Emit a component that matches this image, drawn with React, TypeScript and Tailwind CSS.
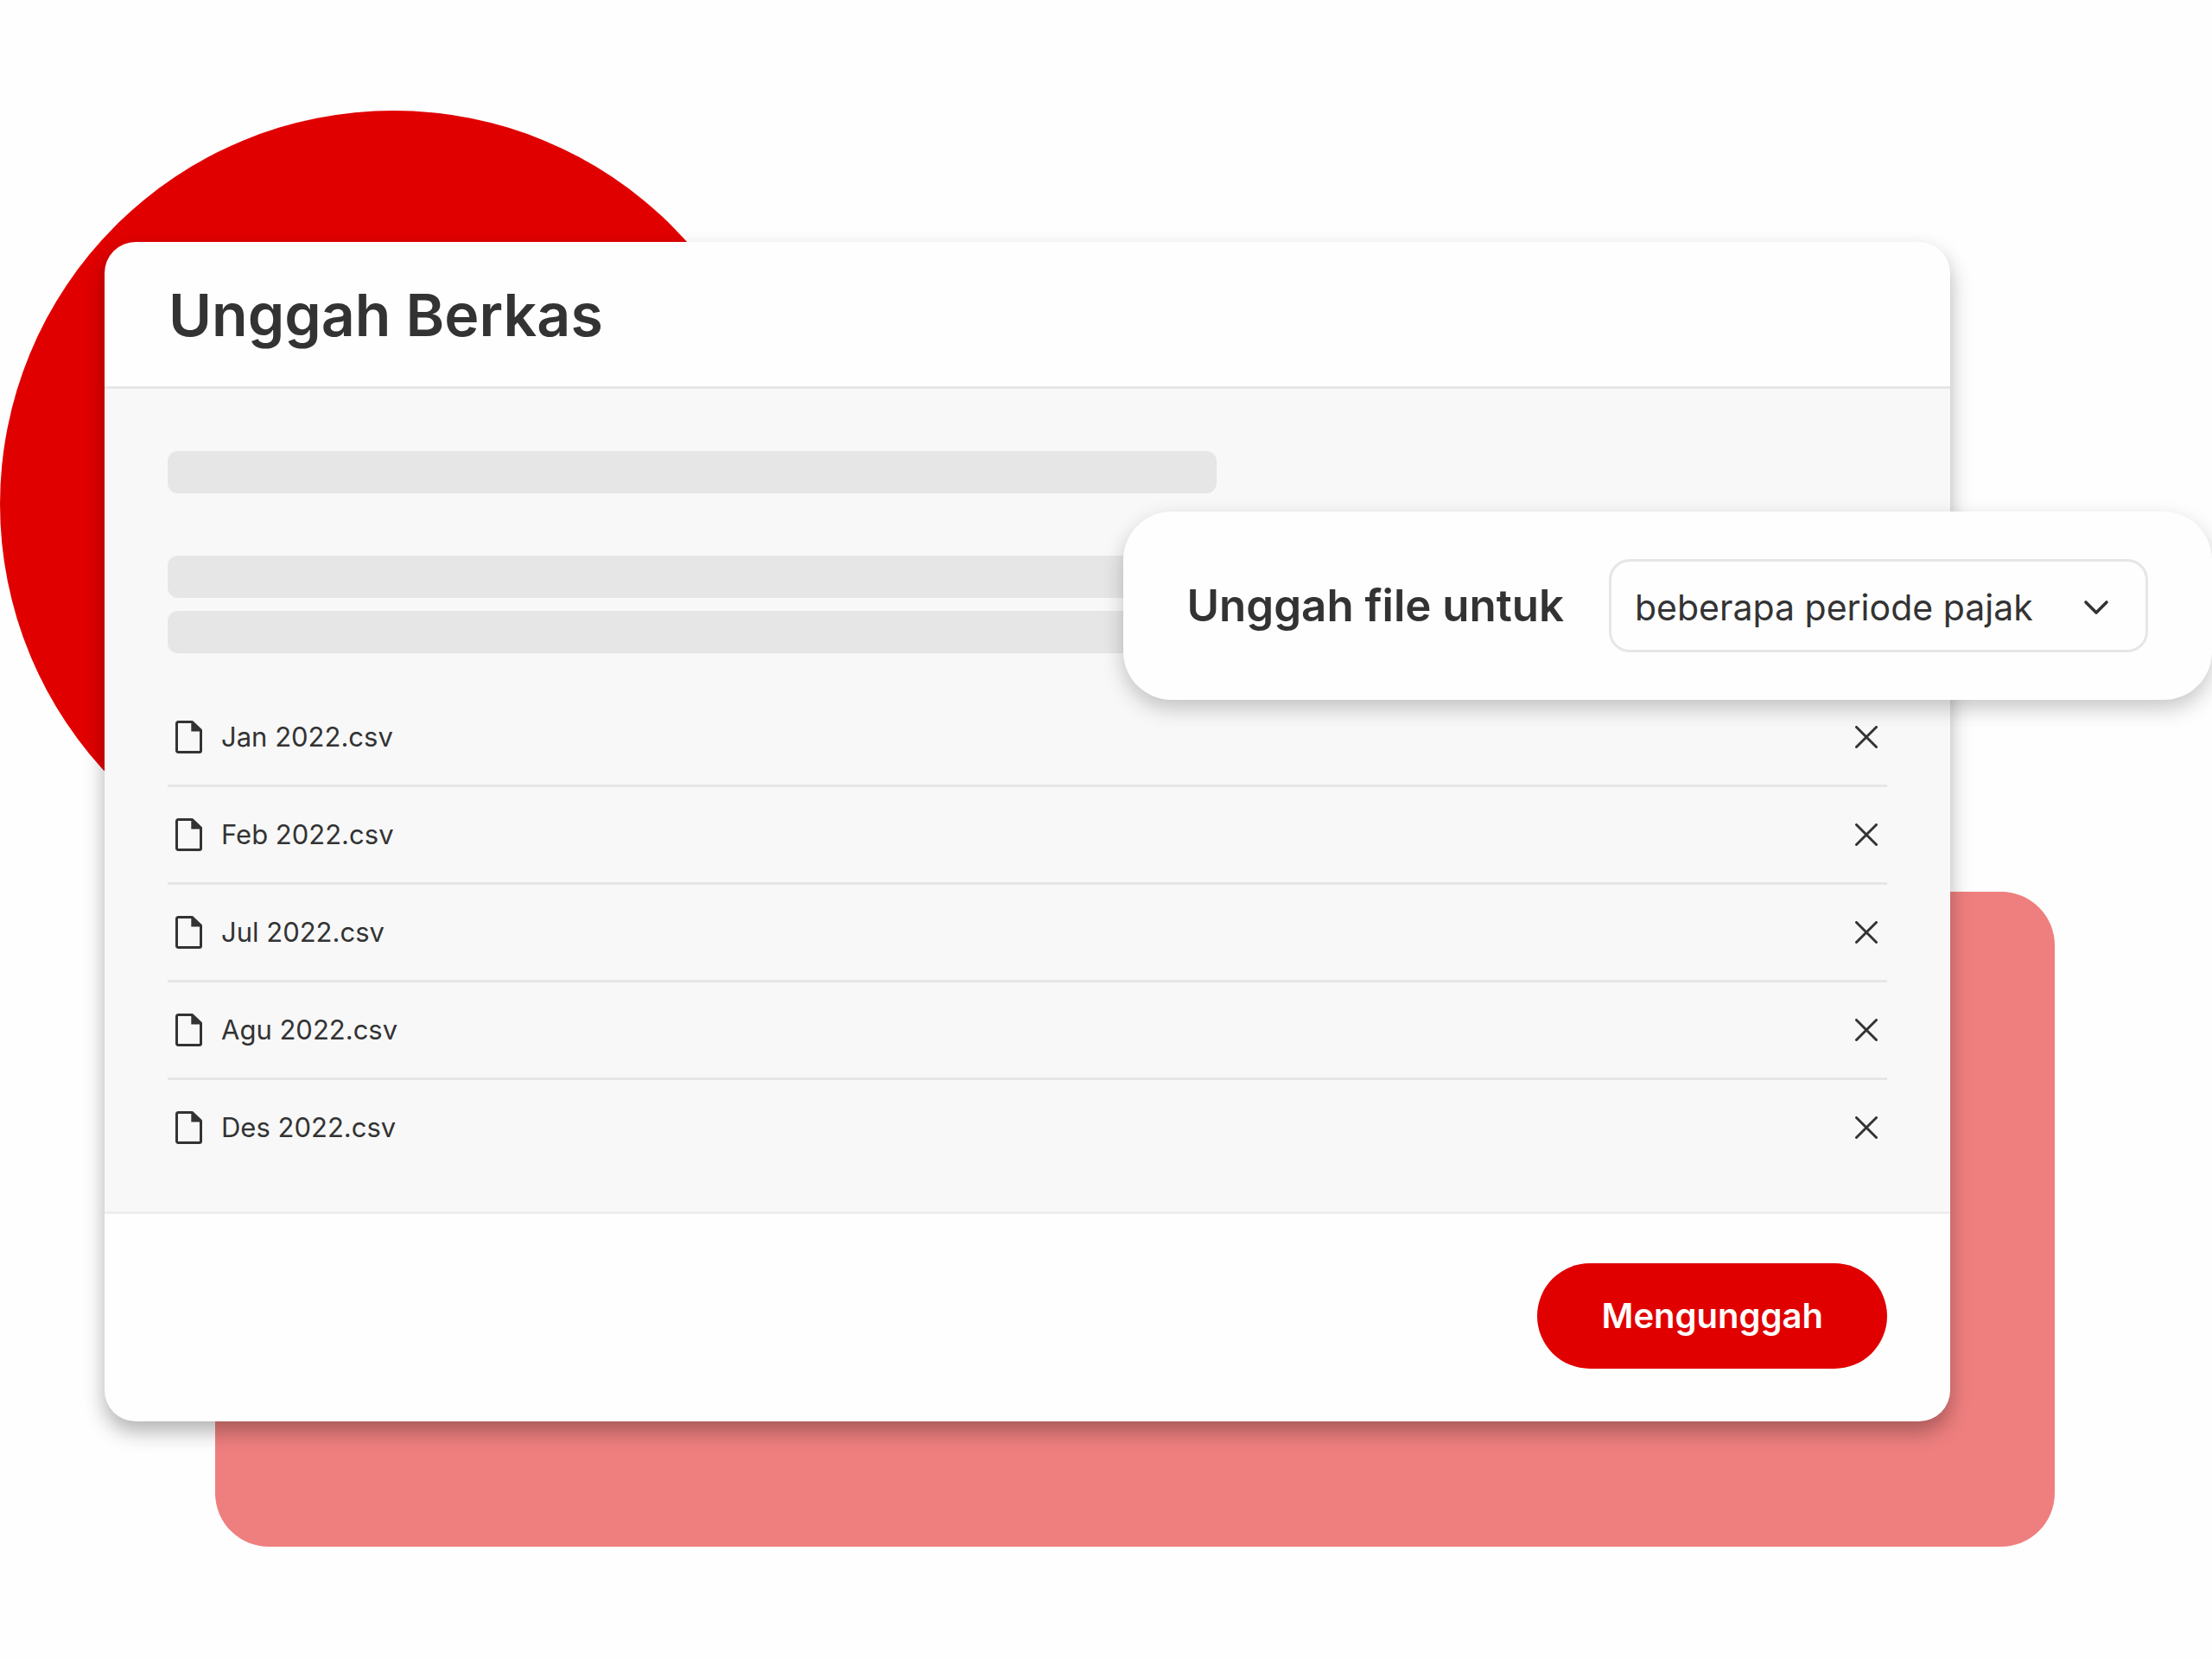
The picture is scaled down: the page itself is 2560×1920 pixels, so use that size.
import { useState } from "react";
import { ChevronDown } from "lucide-react";

const initialFiles = [
  "Jan 2022.csv",
  "Feb 2022.csv",
  "Jul 2022.csv",
  "Agu 2022.csv",
  "Des 2022.csv",
];

function FileIcon() {
  return (
    <svg viewBox="0 0 31 38" className="w-[31px] h-[38px] shrink-0" aria-hidden="true">
      <path
        d="M19.5 1.5H3.2A1.7 1.7 0 0 0 1.5 3.2v31.6A1.7 1.7 0 0 0 3.2 36.5h24.6A1.7 1.7 0 0 0 29.5 34.8V11.2Z"
        fill="none"
        stroke="#333333"
        strokeWidth="3"
        strokeLinejoin="round"
      />
      <path d="M18.3 1.2h1.8L30 11v1.4H18.3Z" fill="#333333" />
    </svg>
  );
}

function CloseIcon() {
  return (
    <svg viewBox="0 0 26 26" className="w-[26px] h-[26px]" aria-hidden="true">
      <path
        d="M1.5 1.5l23 23M24.5 1.5l-23 23"
        fill="none"
        stroke="#333333"
        strokeWidth="3"
        strokeLinecap="round"
      />
    </svg>
  );
}

interface FileRowProps {
  name: string;
  onRemove: () => void;
}

function FileRow({ name, onRemove }: FileRowProps) {
  return (
    <li className="flex items-center justify-between border-b-3 border-[#e6e6e6] pl-[9px] pr-[11px] last:border-b-0">
      <div className="flex items-center gap-[22px] h-[110px]">
        <FileIcon />
        <span className="text-[31px] leading-10">{name}</span>
      </div>
      <button type="button" aria-label={`Hapus ${name}`} onClick={onRemove}>
        <CloseIcon />
      </button>
    </li>
  );
}

function PeriodPicker() {
  return (
    <div className="absolute right-0 top-[592px] flex items-center gap-[52px] rounded-[56px] bg-[#fefefe] px-[74px] py-[55px] shadow-[0_10px_24px_rgba(0,0,0,0.22)]">
      <label htmlFor="period" className="text-[51px] leading-[56px] font-semibold whitespace-nowrap">
        Unggah file untuk
      </label>
      <div className="relative">
        <select
          id="period"
          className="w-[624px] h-[108px] appearance-none rounded-[24px] border-3 border-[#e6e6e6] bg-transparent pt-1.5 pl-[27px] pr-24 text-[41px]"
        >
          <option>beberapa periode pajak</option>
        </select>
        <ChevronDown
          className="absolute right-9 top-8 w-12 h-12 pointer-events-none"
          strokeWidth={1.8}
        />
      </div>
    </div>
  );
}

export default function App() {
  const [files, setFiles] = useState(initialFiles);

  return (
    <main className="relative min-h-screen overflow-hidden bg-[#fefefe] pt-[280px] pl-[121px] pr-[303px] pb-[275px] font-['Inter',sans-serif] text-[#333333]">
      <div className="absolute left-0 top-32 size-[911px] rounded-full bg-[#e10000]" />
      <div className="absolute left-[249px] right-[182px] top-[1032px] h-[758px] rounded-[62px] bg-[#ef7f7f]" />

      <section className="relative overflow-hidden rounded-[36px] bg-[#fefefe] shadow-[0_12px_24px_rgba(0,0,0,0.3)]">
        <header className="border-b-3 border-[#e6e6e6] px-[74px] pt-11 pb-[43px]">
          <h1 className="text-[68px] leading-[80px] font-semibold">Unggah Berkas</h1>
        </header>

        <div className="border-b-3 border-[#eeeeee] bg-[#f8f8f8] px-[73px] pt-[72px] pb-[42px]">
          <div className="h-[49px] w-[61%] rounded-xl bg-[#e6e6e6]" />
          <div className="mt-[72px] h-[49px] w-[61%] rounded-xl bg-[#e6e6e6]" />
          <div className="mt-[15px] h-[49px] w-[61%] rounded-xl bg-[#e6e6e6]" />

          <ul className="mt-[42px]">
            {files.map((name) => (
              <FileRow
                key={name}
                name={name}
                onRemove={() => setFiles(files.filter((f) => f !== name))}
              />
            ))}
          </ul>
        </div>

        <footer className="flex justify-end px-[73px] pt-[57px] pb-[61px]">
          <button
            type="button"
            className="rounded-full bg-[#e10000] px-[74px] h-[122px] text-[40px] font-semibold text-white"
          >
            Mengunggah
          </button>
        </footer>
      </section>

      <PeriodPicker />
    </main>
  );
}
